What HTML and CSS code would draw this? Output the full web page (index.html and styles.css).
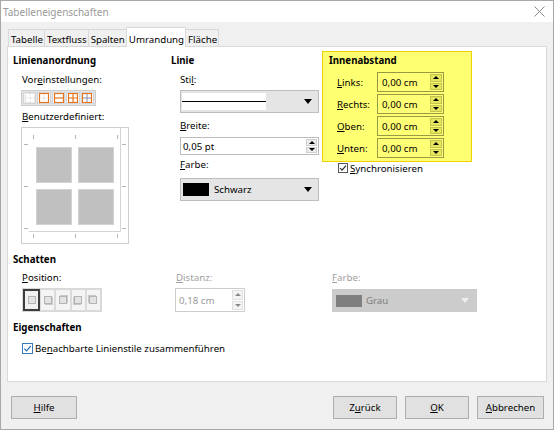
FILE: index.html
```html
<!DOCTYPE html>
<html>
<head>
<meta charset="utf-8">
<link rel="stylesheet" href="styles.css">
</head>
<body>
<div class="win">
  <div class="titlebar">
    <span class="title">Tabelleneigenschaften</span>
    <svg class="close" width="11" height="11" viewBox="0 0 11 11"><path d="M0.5 0.5L10.5 10.5M10.5 0.5L0.5 10.5" stroke="#8a8a8a" stroke-width="1"/></svg>
  </div>
  <div class="client">
    <div class="tabs">
      <div class="tab">Tabelle</div>
      <div class="tab">Textfluss</div>
      <div class="tab">Spalten</div>
      <div class="tab active">Umrandung</div>
      <div class="tab">Fläche</div>
    </div>
    <div class="panel">
      <div class="top">
        <div class="col">
          <div class="h">Linienanordnung</div>
          <div class="lbl">Vor<u>e</u>instellungen:</div>
          <div class="presets">
            <span class="pb"><svg width="10" height="10" viewBox="0 0 10 10"><rect x="0.5" y="0.5" width="9" height="9" fill="#fff" stroke="#d6d6d6" stroke-dasharray="1 1"/><path d="M5 0.5V9.5M0.5 5H9.5" stroke="#d6d6d6" stroke-dasharray="1 1"/></svg></span>
            <span class="pb"><svg width="10" height="10" viewBox="0 0 10 10"><rect x="0.5" y="0.5" width="9" height="9" fill="#fff" stroke="#e8731a" stroke-width="1.2"/><path d="M5 2V8M2 5H8" stroke="#e4e4e4"/></svg></span>
            <span class="pb"><svg width="10" height="10" viewBox="0 0 10 10"><rect x="0.5" y="0.5" width="9" height="9" fill="#fff" stroke="#e8731a" stroke-width="1.2"/><path d="M0.5 5H9.5" stroke="#e8731a" stroke-width="1.2"/></svg></span>
            <span class="pb"><svg width="10" height="10" viewBox="0 0 10 10"><rect x="0.5" y="0.5" width="9" height="9" fill="#fff" stroke="#e8731a" stroke-width="1.2"/><path d="M0.5 5H9.5M5 0.5V9.5" stroke="#e8731a" stroke-width="1.2"/></svg></span>
            <span class="pb"><svg width="10" height="10" viewBox="0 0 10 10"><rect x="0.5" y="0.5" width="9" height="9" fill="#fff" stroke="#e8731a" stroke-width="1.2"/><path d="M1 5H9M5 1V9" stroke="#8a8aa8" stroke-width="1"/></svg></span>
          </div>
          <div class="lbl lbl-b"><u>B</u>enutzerdefiniert:</div>
          <div class="frame">
            <svg width="108" height="117" viewBox="0 0 108 117">
              <rect x="0.5" y="0.5" width="107" height="116" fill="#fff" stroke="#cfcfcf"/>
              <path d="M99.5 1V104.5H8" fill="none" stroke="#d4d4d4"/>
              <path d="M3 17.5H7M3 59.5H7M3 101.5H7M101 17.5H105M101 59.5H105M101 101.5H105M12.5 8V12M54.5 8V12M96.5 8V12M12.5 107V111M54.5 107V111M96.5 107V111" stroke="#b4b4b4"/>
              <g fill="#c0c0c0" stroke="#d2d2d2">
                <rect x="15.5" y="20.5" width="35" height="35"/>
                <rect x="57.5" y="20.5" width="35" height="35"/>
                <rect x="15.5" y="62.5" width="35" height="35"/>
                <rect x="57.5" y="62.5" width="35" height="35"/>
              </g>
            </svg>
          </div>
        </div>
        <div class="col">
          <div class="h">Linie</div>
          <div class="lbl">Sti<u>l</u>:</div>
          <div class="dd ctl">
            <span class="preview"><span class="stroke"></span></span>
            <span class="arrow"></span>
          </div>
          <div class="lbl lbl-g5"><u>B</u>reite:</div>
          <div class="spin ctl spin-w">
            <span class="val">0,05 pt</span>
            <span class="arrows"><span class="arr"><i class="up"></i></span><span class="arr"><i class="down"></i></span></span>
          </div>
          <div class="lbl lbl-g2"><u>F</u>arbe:</div>
          <div class="dd ctl dd-c">
            <span class="swatch"></span><span class="ddtext">Schwarz</span>
            <span class="arrow"></span>
          </div>
        </div>
        <div class="col">
          <div class="yellow">
            <div class="h h-in">Innenabstand</div>
            <div class="prow prow-first"><span class="plbl"><u>L</u>inks:</span><span class="yspin"><span class="val">0,00 cm</span><span class="arrows"><span class="arr"><i class="up"></i></span><span class="arr"><i class="down"></i></span></span></span></div>
            <div class="prow"><span class="plbl"><u>R</u>echts:</span><span class="yspin"><span class="val">0,00 cm</span><span class="arrows"><span class="arr"><i class="up"></i></span><span class="arr"><i class="down"></i></span></span></span></div>
            <div class="prow"><span class="plbl"><u>O</u>ben:</span><span class="yspin"><span class="val">0,00 cm</span><span class="arrows"><span class="arr"><i class="up"></i></span><span class="arr"><i class="down"></i></span></span></span></div>
            <div class="prow"><span class="plbl"><u>U</u>nten:</span><span class="yspin"><span class="val">0,00 cm</span><span class="arrows"><span class="arr"><i class="up"></i></span><span class="arr"><i class="down"></i></span></span></span></div>
          </div>
          <div class="check sync">
            <svg width="10" height="10" viewBox="0 0 10 10"><rect x="0.5" y="0.5" width="9" height="9" fill="#fff" stroke="#555"/><path d="M2 5L4 7.2L8 2.6" fill="none" stroke="#222" stroke-width="1.1"/></svg>
            <span><u>S</u>ynchronisieren</span>
          </div>
        </div>
      </div>

      <div class="h h-sec">Schatten</div>
      <div class="shadow">
        <div class="scol">
          <div class="lbl"><u>P</u>osition:</div>
          <div class="posbtns">
            <span class="posb sel"><i class="sq"></i></span>
            <span class="posb"><i class="sq sq-br"></i></span>
            <span class="posb"><i class="sq sq-tr"></i></span>
            <span class="posb"><i class="sq sq-bl"></i></span>
            <span class="posb"><i class="sq sq-tl"></i></span>
          </div>
        </div>
        <div class="scol">
          <div class="lbl lbl-dis"><u>D</u>istanz:</div>
          <div class="spin ctl spin-d dis">
            <span class="val">0,18 cm</span>
            <span class="arrows"><span class="arr"><i class="up"></i></span><span class="arr"><i class="down"></i></span></span>
          </div>
        </div>
        <div class="scol">
          <div class="lbl lbl-dis"><u>F</u>arbe:</div>
          <div class="dd dd-g">
            <span class="swatch swatch-g"></span><span class="ddtext">Grau</span>
            <span class="arrow arrow-g"></span>
          </div>
        </div>
      </div>

      <div class="h h-sec">Eigenschaften</div>
      <div class="check merge">
        <svg width="11" height="11" viewBox="0 0 11 11"><rect x="0.5" y="0.5" width="10" height="10" fill="#fff" stroke="#3a78b8"/><path d="M2.3 5.6L4.5 7.8L8.8 3" fill="none" stroke="#2a6fb5" stroke-width="1.2"/></svg>
        <span>Be<u>n</u>achbarte Linienstile zusammenführen</span>
      </div>
    </div>

    <div class="btns">
      <div class="btn btn-help"><span><u>H</u>ilfe</span></div>
      <div class="btn btn-back"><span>Z<u>u</u>rück</span></div>
      <div class="btn btn-ok"><span><u>O</u>K</span></div>
      <div class="btn btn-cancel"><span><u>A</u>bbrechen</span></div>
    </div>
  </div>
</div>
</body>
</html>
```

FILE: styles.css
```css
* { box-sizing: border-box; margin: 0; padding: 0; }
body { margin: 0; font-family: "Noto Sans", "DejaVu Sans", sans-serif; font-size: 9.7px; color: #000; background: #fff; }
u { text-decoration: underline; text-underline-offset: 1px; }
i { display: block; }

.win { width: 554px; height: 430px; border: 1px solid #a8a8a8; background: #f0f0f0; display: flex; flex-direction: column; }
.titlebar { height: 21px; flex: none; background: #fff; display: flex; align-items: center; justify-content: space-between; padding: 0 8px 0 2px; }
.title { color: #999; font-size: 10px; }

.client { flex: 1; padding: 5px 6px 0 6px; display: flex; flex-direction: column; }

.tabs { display: flex; align-items: flex-end; height: 20px; margin-left: 1px; margin-bottom: -1px; position: relative; z-index: 1; }
.tab { height: 17px; margin-bottom: 1px; border: 1px solid #d9d9d9; border-bottom: none; background: #f0f0f0; padding: 2px 1px 0 2px; line-height: 15px; margin-right: -1px; white-space: nowrap; }
.tab.active { height: 20px; margin-bottom: 0; background: #fff; padding-top: 4px; border-color: #d9d9d9; }

.panel { height: 336px; flex: none; border: 1px solid #d9d9d9; background: #fff; padding: 4px 0 0 5px; }

.top { display: grid; grid-template-columns: 158px 151px 150px; align-items: start; }
.col { display: flex; flex-direction: column; }
.h { font-weight: bold; line-height: 16px; margin-top: 2px; }
.lbl { line-height: 16px; padding-left: 9px; margin-top: 3px; white-space: nowrap; }
.lbl-b { margin-top: 3px; }
.lbl-g5 { margin-top: 5px; }
.lbl-g2 { margin-top: 2px; }

.presets { margin: 2px 0 0 8px; height: 16px; width: 75px; display: flex; border: 1px solid #cdcdcd; background: #e4e4e4; padding: 1px; gap: 1px; }
.pb { flex: 1; display: flex; align-items: center; justify-content: center; background: #f3f3f3; border: 1px solid #d4d4d4; }
.frame { margin: 2px 0 0 8px; width: 108px; height: 117px; }
.frame svg { display: block; }

.ctl { margin-left: 9px; width: 139px; }
.dd { height: 23px; margin-top: 2px; border: 1px solid #bdbdbd; background: #e5e5e5; display: flex; align-items: center; padding: 0 1px; }
.preview { width: 84px; height: 17px; background: #fff; display: flex; align-items: center; }
.stroke { display: block; width: 100%; height: 1px; background: #000; }
.arrow { margin-left: auto; margin-right: 5px; width: 0; height: 0; border-left: 4px solid transparent; border-right: 4px solid transparent; border-top: 5px solid #000; }
.dd-c { margin-top: 5px; }
.swatch { width: 26px; height: 13px; background: #000; margin-left: 1px; }
.ddtext { margin-left: 5px; }

.spin { display: flex; border: 1px solid #bcbcbc; background: #fff; }
.spin .val { flex: 1; padding-left: 2px; display: flex; align-items: center; }
.arrows { width: 13px; display: flex; flex-direction: column; padding: 1px; gap: 1px; }
.arr { flex: 1; display: flex; align-items: center; justify-content: center; background: #ececec; border: 1px solid #cfcfcf; }
.up { width: 0; height: 0; border-left: 3px solid transparent; border-right: 3px solid transparent; border-bottom: 3px solid #000; }
.down { width: 0; height: 0; border-left: 3px solid transparent; border-right: 3px solid transparent; border-top: 3px solid #000; }
.spin-w { height: 18px; margin-top: 3px; }

.yellow { height: 111px; border: 1px solid #f0d000; background: #ffff72; padding: 1px 0 3px 6px; }
.h-in { margin-top: 0; }
.prow { display: flex; align-items: center; height: 20px; margin-top: 2px; padding-left: 8px; }
.prow-first { margin-top: 3px; }
.plbl { width: 40px; }
.yspin { width: 67px; height: 20px; display: flex; border: 1px solid #9a9a44; background: #ffff76; }
.yspin .val { flex: 1; padding-left: 4px; display: flex; align-items: center; }
.yspin .arrows { width: 14px; }
.yspin .arr { background: #e6e660; border-color: #c4c44c; }

.check { display: flex; align-items: center; white-space: nowrap; }
.check svg { flex: none; }
.sync { height: 14px; margin-top: -1px; padding-left: 16px; gap: 2px; }
.merge { height: 16px; margin-top: 4px; padding-left: 9px; gap: 2px; }

.h-sec { margin-top: 8px; }
.shadow { display: grid; grid-template-columns: 163px 156px 150px; }
.scol { display: flex; flex-direction: column; }
.shadow .lbl { margin-top: 2px; }
.shadow .scol + .scol .lbl { padding-left: 0; }
.lbl-dis { color: #a0a0a0; }

.posbtns { margin: 2px 0 0 9px; width: 80px; height: 24px; display: flex; border: 1px solid #d8d8d8; background: #f0f0f0; }
.posb { flex: 1; display: flex; align-items: center; justify-content: center; border: 1px solid #dadada; background: #f4f4f4; }
.posb.sel { border: 2px solid #3c3c3c; background: #f0f0f0; }
.sq { width: 8px; height: 8px; border: 1px solid #b4b4b4; background: #e2e2e2; }
.sq-br { box-shadow: 1px 1px 0 #c8c8c8; }
.sq-tr { box-shadow: 1px -1px 0 #c8c8c8; }
.sq-bl { box-shadow: -1px 1px 0 #c8c8c8; }
.sq-tl { box-shadow: -1px -1px 0 #c8c8c8; }

.spin-d { width: 70px; height: 24px; margin: 2px 0 0 -1px; border-color: #cccccc; }
.dis .val { color: #9a9a9a; padding-left: 3px; }
.dis .arr { background: #f4f4f4; border-color: #e0e0e0; }
.dis .up { border-bottom-color: #8a8a8a; }
.dis .down { border-top-color: #8a8a8a; }

.dd-g { width: 145px; height: 23px; margin-top: 3px; background: #cccccc; border-color: #cccccc; padding-left: 2px; }
.swatch-g { background: #7f7f7f; height: 12px; }
.dd-g .ddtext { color: #7c7c7c; margin-left: 4px; }
.arrow-g { border-top-color: #eeeeee; margin-right: 6px; }

.btns { display: flex; gap: 8px; margin: 14px 3px 0 4px; }
.btn { height: 23px; border: 1px solid #adadad; background: #e1e1e1; display: flex; align-items: center; justify-content: center; }
.btn-help { width: 66px; }
.btn-back { width: 64px; margin-left: auto; }
.btn-ok { width: 64px; }
.btn-cancel { width: 67px; }
```
